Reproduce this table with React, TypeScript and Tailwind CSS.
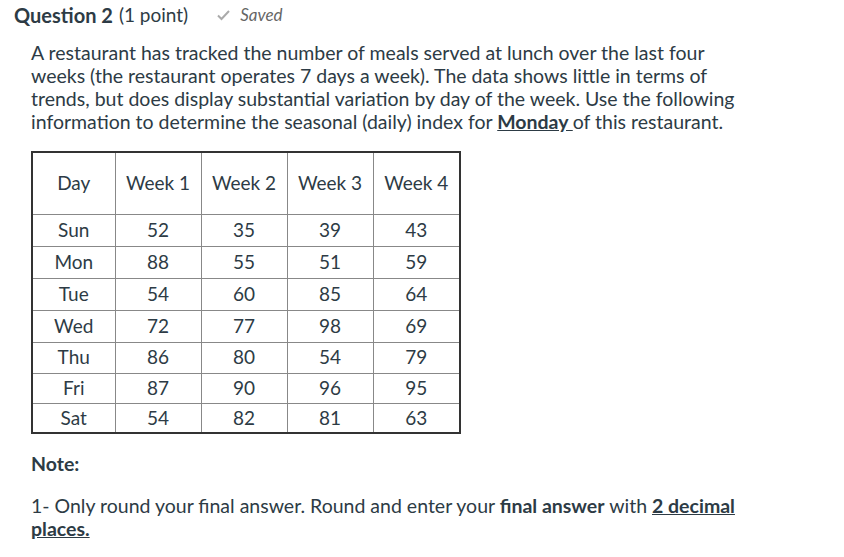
import React from "react";

const rows: [string, number, number, number, number][] = [
  ["Sun", 52, 35, 39, 43],
  ["Mon", 88, 55, 51, 59],
  ["Tue", 54, 60, 85, 64],
  ["Wed", 72, 77, 98, 69],
  ["Thu", 86, 80, 54, 79],
  ["Fri", 87, 90, 96, 95],
  ["Sat", 54, 82, 81, 63],
];
const rowH = ["h-[32px]", "h-[32px]", "h-[32px]", "h-[32px]", "h-[31px]", "h-[30px]", "h-[28px]"];
const colW = ["w-[83px]", "w-[86px]", "w-[86px]", "w-[86px]", "w-[87px]"];

export default function App() {
  return (
    <div className="w-[844px] h-[557px] bg-white text-[#2d3b45] overflow-hidden" style={{ fontFamily: "Lato, 'Open Sans', sans-serif" }}>
      <div className="flex items-center pl-[14px] pt-[2px] h-[28px]">
        <span className="text-[20px] font-bold">Question 2</span>
        <span className="text-[19px] ml-[6px]">(1 point)</span>
        <span className="ml-[28px] flex items-center text-[#666] text-[17px] italic">
          <svg width="15" height="14" viewBox="0 0 15 14" className="mr-[9px]">
            <path d="M2 7.5 L5.5 11 L13 3" fill="none" stroke="#aaa" strokeWidth="2" />
          </svg>
          Saved
        </span>
      </div>
      <div className="pl-[31px] pt-[13px] w-[741px] text-[19.5px] leading-[23px]">
        A restaurant has tracked the number of meals served at lunch over the last four weeks (the restaurant operates 7 days a week). The data shows little in terms of trends, but does display substantial variation by day of the week. Use the following information to determine the seasonal (daily) index for <span className="font-bold underline">Monday </span>of this restaurant.
      </div>
      <div className="pl-[31px] pt-[18px]">
        <table className="border-collapse border-2 border-[#333] text-[19px] text-center">
          <thead>
            <tr className="h-[62px]">
              {["Day", "Week 1", "Week 2", "Week 3", "Week 4"].map((h, i) => (
                <th key={h} className={`font-normal border border-[#888] p-0 ${colW[i]}`}>{h}</th>
              ))}
            </tr>
          </thead>
          <tbody>
            {rows.map((r, ri) => (
              <tr key={r[0]} className={rowH[ri]}>
                {r.map((c, ci) => (
                  <td key={ci} className="border border-[#888] p-0">{c}</td>
                ))}
              </tr>
            ))}
          </tbody>
        </table>
      </div>
      <div className="pl-[31px] pt-[18px] text-[19.5px] leading-[23px]">
        <div className="font-bold">Note:</div>
        <div className="mt-[19px] w-[710px]">
          1- Only round your final answer. Round and enter your <span className="font-bold">final answer</span> with <span className="font-bold underline">2 decimal places.</span>
        </div>
      </div>
    </div>
  );
}
